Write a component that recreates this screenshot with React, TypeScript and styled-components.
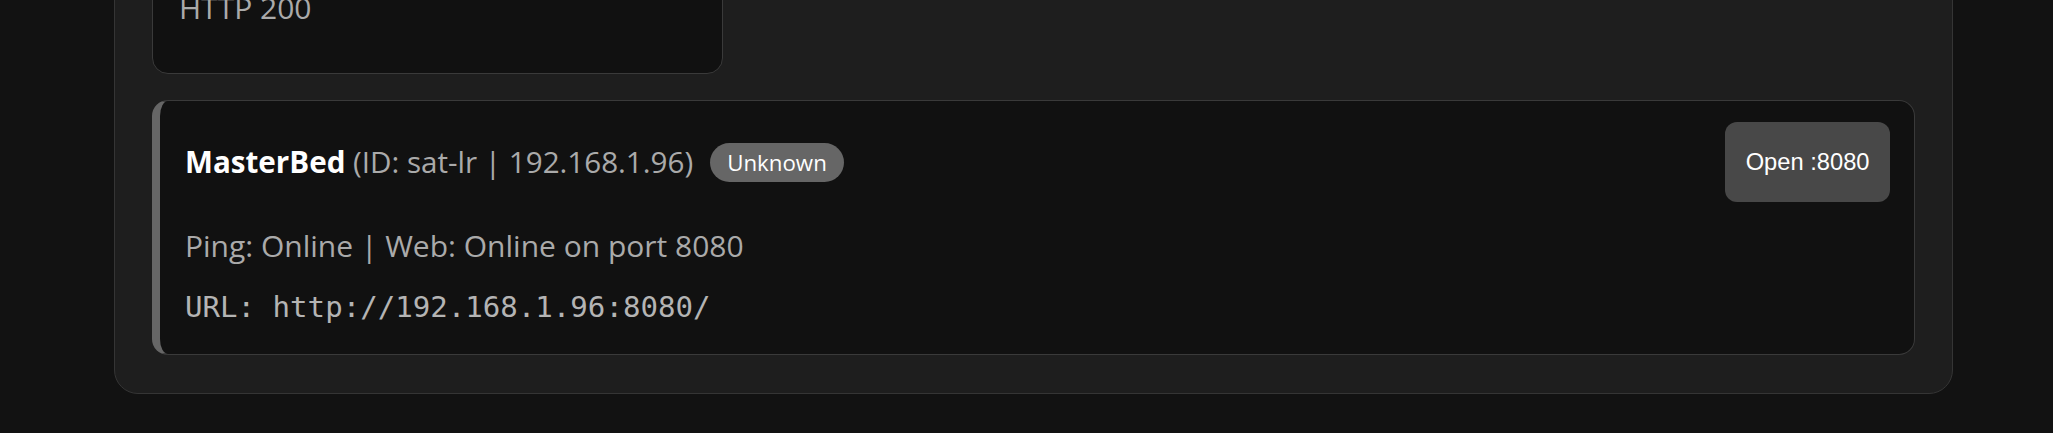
import React from "react";
import styled, { createGlobalStyle } from "styled-components";

const GlobalStyle = createGlobalStyle`
  html, body {
    margin: 0;
    padding: 0;
    background: #121212;
    overflow: hidden;
  }
  body {
    font-family: "Open Sans", "Noto Sans", sans-serif;
    color: #e0e0e0;
  }
`;

const Page = styled.div`
  padding: 0 100px 0 114px;
  margin-top: -77px;
`;

const Panel = styled.section`
  background: #1e1e1e;
  border: 1px solid #353535;
  border-radius: 24px;
  padding: 37px 37px 38px 37px;
  display: flex;
  flex-direction: column;
  gap: 26px;
`;

const Card = styled.div<{ $accent?: string }>`
  background: #111111;
  border: 1px solid #3a3a3a;
  border-left: ${(p) => (p.$accent ? `8px solid ${p.$accent}` : "1px solid #3a3a3a")};
  border-radius: 16px;
`;

const StatusCard = styled(Card)`
  width: 571px;
  box-sizing: border-box;
  padding: 26px 26px 45px 26px;
`;

const DeviceCard = styled(Card)`
  padding: 21px 24px 27px 25px;
`;

const Header = styled.div`
  display: flex;
  align-items: center;
  justify-content: space-between;
`;

const TitleGroup = styled.div`
  display: flex;
  align-items: center;
  gap: 17px;
`;

const Title = styled.div`
  font-size: 29.6px;
  line-height: 40px;
  color: #aaaaaa;
`;

const Name = styled.strong`
  color: #ffffff;
  font-weight: 700;
`;

const Badge = styled.span`
  display: inline-block;
  background: #666666;
  color: #ffffff;
  font-size: 22.3px;
  line-height: 39px;
  padding: 0 17px;
  border-radius: 999px;
`;

const OpenButton = styled.button`
  font-family: "Liberation Sans", Arial, sans-serif;
  font-size: 23.7px;
  line-height: 28px;
  color: #ffffff;
  background: #484848;
  border: none;
  border-radius: 12px;
  padding: 26px 20.5px;
  cursor: pointer;
`;

const Line = styled.p<{ $mt: number }>`
  margin: ${(p) => p.$mt}px 0 0 0;
  font-size: 30px;
  line-height: 40px;
  color: #aaaaaa;
`;

const MonoLine = styled.p<{ $mt: number }>`
  margin: ${(p) => p.$mt}px 0 0 0;
  font-family: "DejaVu Sans Mono", "Liberation Mono", monospace;
  font-size: 29.1px;
  line-height: 40px;
  color: #b4b4b4;
`;

export default function App() {
  return (
    <>
      <GlobalStyle />
      <Page>
        <Panel>
          <StatusCard>
            <Line $mt={0}>HTTP 200</Line>
          </StatusCard>
          <DeviceCard $accent="#666666">
            <Header>
              <TitleGroup>
                <Title>
                  <Name>MasterBed</Name> (ID: sat-lr | 192.168.1.96)
                </Title>
                <Badge>Unknown</Badge>
              </TitleGroup>
              <OpenButton>Open :8080</OpenButton>
            </Header>
            <Line $mt={24}>Ping: Online | Web: Online on port 8080</Line>
            <MonoLine $mt={21}>URL: http://192.168.1.96:8080/</MonoLine>
          </DeviceCard>
        </Panel>
      </Page>
    </>
  );
}
